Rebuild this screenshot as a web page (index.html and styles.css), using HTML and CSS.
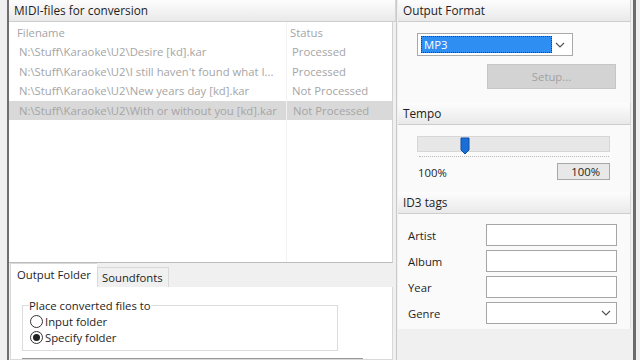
FILE: index.html
```html
<!DOCTYPE html>
<html lang="en">
<head>
    <meta charset="UTF-8">
    <title>MIDI to MP3 converter</title>
    <link rel="stylesheet" href="styles.css">
</head>
<body>

<div class="app">
    <div class="main">
        <div class="panel-head">MIDI-files for conversion</div>
        <div class="file-list">
            <div class="row head">
                <span class="name">Filename</span>
                <span class="status">Status</span>
            </div>
            <div class="row">
                <span class="name">N:\Stuff\Karaoke\U2\Desire [kd].kar</span>
                <span class="status">Processed</span>
            </div>
            <div class="row">
                <span class="name">N:\Stuff\Karaoke\U2\I still haven't found what I...</span>
                <span class="status">Processed</span>
            </div>
            <div class="row">
                <span class="name">N:\Stuff\Karaoke\U2\New years day [kd].kar</span>
                <span class="status">Not Processed</span>
            </div>
            <div class="row selected">
                <span class="name">N:\Stuff\Karaoke\U2\With or without you [kd].kar</span>
                <span class="status">Not Processed</span>
            </div>
        </div>

        <div class="tabs">
            <div class="tab active">Output Folder</div>
            <div class="tab">Soundfonts</div>
        </div>
        <div class="tab-page">
            <fieldset class="group">
                <legend>Place converted files to</legend>
                <label class="radio"><span class="dot"></span>Input folder</label>
                <label class="radio checked"><span class="dot"></span>Specify folder</label>
            </fieldset>
            <div class="folder-input"></div>
        </div>
    </div>

    <div class="side">
        <div class="panel-head">Output Format</div>
        <div class="section format">
            <div class="combo">
                <span class="combo-value">MP3</span>
                <svg class="chevron" width="10" height="6" viewBox="0 0 10 6"><path d="M1 1l4 4 4-4" fill="none" stroke="#555" stroke-width="1.2"/></svg>
            </div>
            <div class="setup">Setup...</div>
        </div>

        <div class="panel-head">Tempo</div>
        <div class="section tempo">
            <div class="track">
                <svg class="thumb" width="10" height="18" viewBox="0 0 10 18"><path d="M1 1h8v12l-4 4-4-4z" fill="#1a6fd6" stroke="#0d4fa8" stroke-width="1"/></svg>
            </div>
            <div class="ticks"></div>
            <div class="tempo-values">
                <span>100%</span>
                <span class="tempo-box">100%</span>
            </div>
        </div>

        <div class="panel-head">ID3 tags</div>
        <div class="section tags">
            <div class="field"><span>Artist</span><div class="box"></div></div>
            <div class="field"><span>Album</span><div class="box"></div></div>
            <div class="field"><span>Year</span><div class="box"></div></div>
            <div class="field"><span>Genre</span>
                <div class="box">
                    <svg class="chevron" width="10" height="6" viewBox="0 0 10 6"><path d="M1 1l4 4 4-4" fill="none" stroke="#555" stroke-width="1.2"/></svg>
                </div>
            </div>
        </div>
    </div>
</div>

</body>
</html>
```

FILE: styles.css
```css
* {
    box-sizing: border-box;
}
body {
    margin: 0;
    width: 640px;
    height: 360px;
    overflow: hidden;
    background-color: #f0f0f0;
    font-family: "Open Sans", "Noto Sans", sans-serif;
    font-size: 11.3px;
    color: #1e1e1e;
}
.app {
    display: flex;
    height: 360px;
    width: 629px;
    margin-left: 7px;
    border-left: 2px solid #6f6f6f;
    border-right: 3px solid #6b6b6b;
}
.panel-head {
    flex-shrink: 0;
    height: 22px;
    line-height: 21px;
    padding-left: 5px;
    background: linear-gradient(#fdfdfd, #e9e9e9);
    border-bottom: 1px solid #cdcdcd;
    border-right: 1px solid #d6d6d6;
    font-size: 11.8px;
}

/* left side */
.main {
    width: 387px;
    display: flex;
    flex-direction: column;
}
.file-list {
    flex-shrink: 0;
    height: 241px;
    margin-right: 3px;
    padding-top: 2px;
    background-color: #fff;
    border-right: 1px solid #d2d2d2;
    border-bottom: 1px solid #bcbcbc;
    color: #a5a5a5;
    background-image: linear-gradient(#f2f2f2, #f2f2f2);
    background-size: 1px 100%;
    background-position: 277px 0;
    background-repeat: no-repeat;
}
.row {
    display: flex;
    height: 19.6px;
    line-height: 19px;
}
.row.head {
    height: 18px;
    line-height: 18px;
}
.row .name {
    width: 277px;
    padding-left: 10px;
    padding-right: 4px;
    white-space: nowrap;
    overflow: hidden;
}
.row .status {
    flex: 1;
    padding-left: 6px;
}
.row.head .name {
    padding-left: 8px;
}
.row.head .status {
    padding-left: 4px;
}
.row.selected .name,
.row.selected .status {
    background-color: #d9d9d9;
}
.row.selected .status {
    margin-left: 1px;
}

.tabs {
    flex-shrink: 0;
    display: flex;
    height: 24px;
    padding-left: 1px;
    align-items: flex-end;
}
.tab {
    height: 20px;
    line-height: 19px;
    padding: 0 5px 0 4px;
    white-space: nowrap;
    background-color: #f0f0f0;
    border: 1px solid #d9d9d9;
    border-bottom: none;
}
.tab.active {
    height: 24px;
    line-height: 22px;
    width: 87px;
    padding-left: 6px;
    background-color: #fff;
    border-right: none;
}
.tab-page {
    flex: 1;
    overflow: hidden;
    margin-right: 3px;
    margin-left: 1px;
    background-color: #fff;
    border: 1px solid #d9d9d9;
    border-top: none;
    padding: 11px 0 0 11px;
}
.group {
    width: 316px;
    height: 53px;
    margin: 0;
    padding: 0 0 0 8px;
    border: 1px solid #dcdcdc;
}
.group legend {
    padding: 0;
    line-height: 15px;
    margin-left: -2px;
}
.radio {
    display: flex;
    align-items: center;
    height: 16px;
    margin-left: -1px;
}
.dot {
    width: 13px;
    height: 13px;
    border: 1px solid #333;
    border-radius: 50%;
    margin-right: 2px;
    display: flex;
    align-items: center;
    justify-content: center;
}
.radio.checked .dot::after {
    content: "";
    width: 7px;
    height: 7px;
    border-radius: 50%;
    background-color: #222;
}
.folder-input {
    width: 341px;
    height: 20px;
    margin-top: 7px;
    border: 1px solid #9a9a9a;
    background-color: #f4f4f4;
}

/* right side */
.side {
    width: 237px;
    display: flex;
    flex-direction: column;
    border-left: 1px solid #c9c9c9;
    padding-left: 1px;
    background-color: #f0f0f0;
}
.side .panel-head {
    margin-right: 2px;
}
.section {
    flex-shrink: 0;
    margin-right: 2px;
    background-color: #fafafa;
    border-right: 1px solid #e2e2e2;
}
.format {
    height: 81px;
    padding: 11px 0 0 19px;
}
.combo {
    width: 156px;
    height: 23px;
    border: 1px solid #a9a9a9;
    background-color: #fff;
    display: flex;
    align-items: center;
    padding: 0 7px 0 3px;
    justify-content: space-between;
}
.combo-value {
    width: 131px;
    height: 17px;
    line-height: 16px;
    padding-left: 2px;
    background-color: #2f8ef2;
    border: 1px dotted #1a3c70;
    color: #fff;
}
.setup {
    width: 129px;
    height: 25px;
    margin: 8px 0 0 70px;
    background-color: #d3d3d3;
    border: 1px solid #c6c6c6;
    color: #a2a2a2;
    text-align: center;
    line-height: 23px;
}
.tempo {
    height: 67px;
    padding: 11px 0 0 19px;
}
.track {
    position: relative;
    width: 193px;
    height: 16px;
    background-color: #e7e7e7;
    border: 1px solid #d6d6d6;
}
.thumb {
    position: absolute;
    left: 42px;
    top: 0;
}
.ticks {
    width: 190px;
    margin: 4px 0 0 2px;
    border-top: 1px dotted #b9b9b9;
}
.tempo-values {
    display: flex;
    justify-content: space-between;
    align-items: center;
    width: 193px;
    margin-top: 6px;
}
.tempo-values span:first-child {
    margin-top: 2px;
    padding-left: 1px;
}
.tempo-box {
    width: 53px;
    height: 17px;
    line-height: 16px;
    text-align: right;
    padding-right: 9px;
    background-color: #e8e8e8;
    border: 1px solid #a8a8a8;
}
.tags {
    height: 115px;
    padding: 8px 0 0 10px;
}
.field {
    display: flex;
    align-items: center;
    height: 26px;
}
.field span {
    width: 78px;
}
.field .box {
    width: 131px;
    height: 22px;
    border: 1px solid #a6a6a6;
    background-color: #fff;
    display: flex;
    align-items: center;
    justify-content: flex-end;
    padding-right: 5px;
}
```
